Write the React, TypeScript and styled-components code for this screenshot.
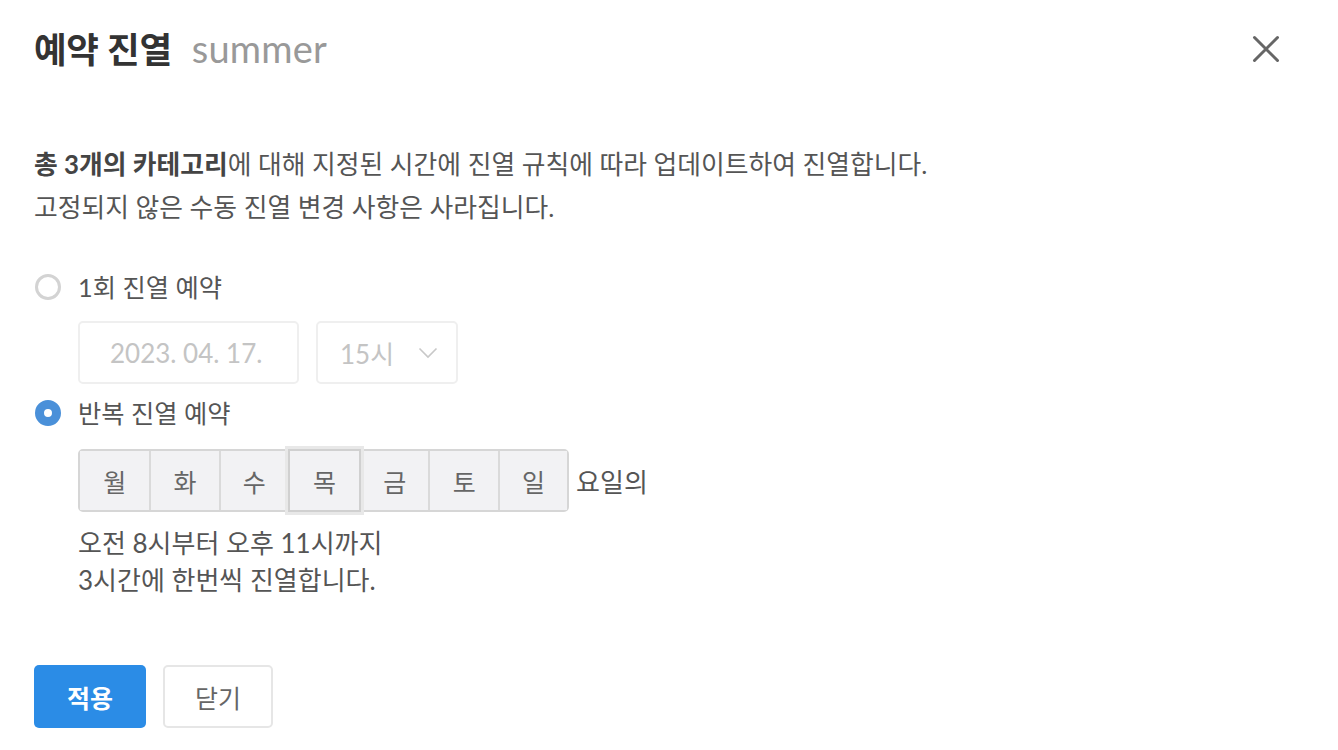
import React, { useState } from "react";
import styled, { createGlobalStyle } from "styled-components";

const Global = createGlobalStyle`
  html, body { margin: 0; padding: 0; background: #fff; }
  body { font-family: Lato, "Noto Sans CJK KR", sans-serif; color: #555; }
  * { box-sizing: border-box; }
`;

const Dialog = styled.div`
  width: 1338px;
  height: 750px;
  padding: 28px 34px 0 34px;
  display: flex;
  flex-direction: column;
`;

const Header = styled.div`
  display: flex;
  align-items: center;
  justify-content: space-between;
  height: 42px;
`;

const Title = styled.h1`
  margin: 0;
  font-size: 35.5px;
  font-weight: 700;
  color: #333;
  line-height: 42px;
  letter-spacing: -0.3px;
`;

const Sub = styled.span`
  font-size: 38px;
  font-weight: 400;
  color: #999;
  margin-left: 20px;
  letter-spacing: 0.2px;
`;

const Close = styled.button`
  border: 0;
  background: none;
  padding: 0;
  width: 32px;
  height: 32px;
  margin-right: 22px;
  cursor: pointer;
  display: flex;
  align-items: center;
  justify-content: center;
`;

const Desc = styled.p`
  margin: 73px 0 0 0;
  font-size: 25.8px;
  line-height: 43px;
  color: #555;
  b { color: #444; font-weight: 700; }
`;

const RadioRow = styled.label<{ $top: number }>`
  display: flex;
  align-items: center;
  gap: 17px;
  margin-top: ${(p) => p.$top}px;
  font-size: 25.3px;
  line-height: 30px;
  color: #555;
  cursor: pointer;
`;

const RadioDot = styled.span<{ $on: boolean }>`
  width: 26px;
  height: 26px;
  border-radius: 50%;
  flex: none;
  margin-left: 1px;
  border: ${(p) => (p.$on ? "9px solid #4a90d9" : "3px solid #d3d3d3")};
  background: #fff;
`;

const Indent = styled.div<{ $top: number }>`
  margin-left: 44px;
  margin-top: ${(p) => p.$top}px;
  display: flex;
  align-items: center;
  gap: 17px;
`;

const Field = styled.div<{ $w: number; $pl: number }>`
  width: ${(p) => p.$w}px;
  height: 63px;
  border: 2px solid #efefef;
  border-radius: 5px;
  display: flex;
  align-items: center;
  font-size: 26px;
  color: #c4c4c4;
  padding: 0 18px 0 ${(p) => p.$pl}px;
  justify-content: space-between;
`;

const DayGroup = styled.div`
  display: flex;
  border: 2px solid #d6d6d6;
  border-radius: 5px;
  background: #f2f2f4;
  height: 63px;
`;

const Day = styled.button<{ $sel: boolean; $first: boolean }>`
  width: 69.3px;
  height: 59px;
  border: 0;
  border-left: ${(p) => (p.$first ? "0" : "2px solid #dadada")};
  background: #f2f2f4;
  font-family: inherit;
  font-size: 25px;
  color: #666;
  padding: 0;
  position: relative;
  ${(p) =>
    p.$sel &&
    `
    border: 2px solid #d0d0d0;
    margin: -2px -2px -2px 0;
    width: 73.3px;
    height: 63px;
    box-shadow: 0 0 0 3px #e8e8e8;
    z-index: 1;
  `}
`;

const DayTail = styled.span`
  font-size: 26px;
  color: #555;
  margin-left: -10px;
`;

const Info = styled.div`
  margin-left: 44px;
  margin-top: 13px;
  font-size: 26px;
  line-height: 37px;
  color: #555;
`;

const Buttons = styled.div`
  display: flex;
  gap: 17px;
  margin-top: 66px;
`;

const Btn = styled.button<{ $primary?: boolean }>`
  height: 63px;
  width: ${(p) => (p.$primary ? "112px" : "110px")};
  border-radius: 5px;
  font-family: inherit;
  font-size: 25px;
  font-weight: ${(p) => (p.$primary ? 700 : 400)};
  background: ${(p) => (p.$primary ? "#2b8ce6" : "#fff")};
  color: ${(p) => (p.$primary ? "#fff" : "#666")};
  border: ${(p) => (p.$primary ? "0" : "2px solid #e6e6e6")};
  cursor: pointer;
`;

const days = ["월", "화", "수", "목", "금", "토", "일"];

export default function App() {
  const [mode, setMode] = useState<"once" | "repeat">("repeat");
  return (
    <>
      <Global />
      <Dialog>
        <Header>
          <Title>
            예약 진열<Sub>summer</Sub>
          </Title>
          <Close aria-label="닫기">
            <svg width="30" height="30" viewBox="0 0 30 30">
              <path d="M3.5 3.5 L26.5 26.5 M26.5 3.5 L3.5 26.5" stroke="#666" strokeWidth="3" strokeLinecap="round" />
            </svg>
          </Close>
        </Header>
        <Desc>
          <b>총 3개의 카테고리</b>에 대해 지정된 시간에 진열 규칙에 따라 업데이트하여 진열합니다.
          <br />
          고정되지 않은 수동 진열 변경 사항은 사라집니다.
        </Desc>
        <RadioRow $top={43} onClick={() => setMode("once")}>
          <RadioDot $on={mode === "once"} />
          1회 진열 예약
        </RadioRow>
        <Indent $top={19}>
          <Field $w={221} $pl={30}>2023. 04. 17.</Field>
          <Field $w={142} $pl={22}>
            15시
            <svg width="20" height="12" viewBox="0 0 20 12">
              <path d="M1.5 1.5 L10 10 L18.5 1.5" fill="none" stroke="#c8c8c8" strokeWidth="1.6" />
            </svg>
          </Field>
        </Indent>
        <RadioRow $top={14} onClick={() => setMode("repeat")}>
          <RadioDot $on={mode === "repeat"} />
          반복 진열 예약
        </RadioRow>
        <Indent $top={21}>
          <DayGroup>
            {days.map((d, i) => (
              <Day key={d} $sel={d === "목"} $first={i === 0}>
                {d}
              </Day>
            ))}
          </DayGroup>
          <DayTail>요일의</DayTail>
        </Indent>
        <Info>
          오전 8시부터 오후 11시까지
          <br />
          3시간에 한번씩 진열합니다.
        </Info>
        <Buttons>
          <Btn $primary>적용</Btn>
          <Btn>닫기</Btn>
        </Buttons>
      </Dialog>
    </>
  );
}
